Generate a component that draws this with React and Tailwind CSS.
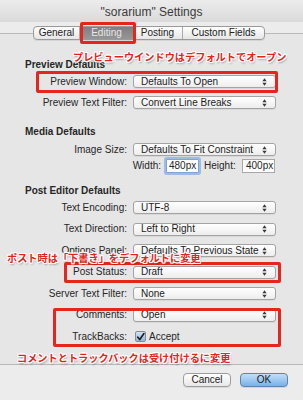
import React from "react";

const Arrows = () => (
  <svg width="5" height="8" viewBox="0 0 5 8" className="shrink-0">
    <path d="M2.5 0.3L4.6 3.2H0.4Z" fill="#3a3a3a" />
    <path d="M2.5 7.7L4.6 4.8H0.4Z" fill="#3a3a3a" />
  </svg>
);

function Popup({ value }) {
  return (
    <div className="w-[143px] h-[13px] flex items-center justify-between pl-[7px] pr-[8px] rounded-[3px] border border-[#a3a3a3] bg-gradient-to-b from-white to-[#ededed] shadow-[0_1px_0_rgba(0,0,0,0.06)] text-[10px] leading-none text-[#1c1c1c]">
      <span>{value}</span>
      <Arrows />
    </div>
  );
}

function Row({ label, children, cls }) {
  return (
    <div className={"flex items-center " + cls}>
      <div className="w-[127px] text-right text-[10px] leading-none text-[#262626]">{label}</div>
      <div className="ml-[6px] flex items-center">{children}</div>
    </div>
  );
}

function Heading({ children, cls }) {
  return (
    <div className={"h-[12px] pl-[25px] flex items-center text-[10px] leading-none font-bold text-[#262626] " + cls}>
      {children}
    </div>
  );
}

const ann =
  "absolute whitespace-nowrap font-bold text-[10.2px] leading-none text-[#e3241b] font-['Noto_Sans_CJK_JP',sans-serif] [text-shadow:1px_0_0_#fff,-1px_0_0_#fff,0_1px_0_#fff,0_-1px_0_#fff,1px_1px_0_#fff,-1px_-1px_0_#fff,1px_-1px_0_#fff,-1px_1px_0_#fff,1px_2px_2px_rgba(0,0,0,0.35)]";

export default function App() {
  return (
    <div className="relative w-[303px] h-[400px] overflow-hidden bg-[#ececec] font-['Liberation_Sans','Noto_Sans_CJK_JP',sans-serif]">
      <div className="h-[22px] bg-gradient-to-b from-[#ececec] to-[#dadada] flex items-center justify-center text-[12px] text-[#3a3a3a] pt-[1px]">
        "sorarium" Settings
      </div>
      <div className="h-[4px]" />
      <div className="relative z-10 h-[14px] -mb-[7px] pl-[33px] flex">
        <div className="flex h-[14px] rounded-[4px] border border-[#9a9a9a] bg-gradient-to-b from-white to-[#e6e6e6] overflow-hidden text-[10px] leading-none text-[#222] shadow-[0_1px_0_rgba(0,0,0,0.08)]">
          <div className="w-[46px] flex items-center justify-center border-r border-[#aaa]">General</div>
          <div className="w-[53px] flex items-center justify-center bg-gradient-to-b from-[#7f7f7f] to-[#969696] text-[#e8e8e8]">Editing</div>
          <div className="w-[50px] flex items-center justify-center border-r border-[#aaa]">Posting</div>
          <div className="w-[81px] flex items-center justify-center">Custom Fields</div>
        </div>
      </div>
      <div className="border-t border-b border-[#b9b9b9] bg-[#e6e6e6] pt-[25px] pb-[16px]">
        <Heading>Preview Defaults</Heading>
        <Row label="Preview Window:" cls="h-[21px]"><Popup value="Defaults To Open" /></Row>
        <Row label="Preview Text Filter:" cls="h-[21px]"><Popup value="Convert Line Breaks" /></Row>
        <Heading cls="mt-[13px]">Media Defaults</Heading>
        <Row label="Image Size:" cls="h-[17px] mt-[3px]"><Popup value="Defaults To Fit Constraint" /></Row>
        <div className="h-[15px] flex items-center text-[10px] leading-none text-[#262626]">
          <div className="w-[161px] text-right">Width:</div>
          <div className="ml-[5px] w-[33px] h-[14px] flex items-center pl-[2px] bg-white border border-[#7ea6da] shadow-[0_0_0_2px_rgba(120,165,225,0.65)] rounded-[1px]">480px</div>
          <div className="ml-[5px] w-[38px]">Height:</div>
          <div className="w-[33px] h-[14px] flex items-center pl-[3px] bg-white border border-[#a8a8a8]">400px</div>
        </div>
        <Heading cls="mt-[12px]">Post Editor Defaults</Heading>
        <Row label="Text Encoding:" cls="h-[21.5px]"><Popup value="UTF-8" /></Row>
        <Row label="Text Direction:" cls="h-[21.5px]"><Popup value="Left to Right" /></Row>
        <Row label="Options Panel:" cls="h-[21.5px]"><Popup value="Defaults To Previous State" /></Row>
        <Row label="Post Status:" cls="h-[21.5px]"><Popup value="Draft" /></Row>
        <Row label="Server Text Filter:" cls="h-[21.5px]"><Popup value="None" /></Row>
        <Row label="Comments:" cls="h-[21.5px]"><Popup value="Open" /></Row>
        <Row label="TrackBacks:" cls="h-[21.5px]">
          <div className="ml-[2px] w-[11px] h-[11px] rounded-[2px] border border-[#8a8a8a] bg-gradient-to-b from-[#cfe2f5] to-[#8fb8e2] flex items-center justify-center">
            <svg width="10" height="10" viewBox="0 0 10 10">
              <path d="M2 5.2L4.2 7.8L8.8 1.2" fill="none" stroke="#1d1d1d" strokeWidth="1.8" strokeLinecap="round" strokeLinejoin="round" />
            </svg>
          </div>
          <span className="ml-[3px] text-[10px] leading-none text-[#262626]">Accept</span>
        </Row>
      </div>
      <div className="mt-[8px] pr-[15px] flex justify-end gap-[9px] text-[10px] leading-none text-[#1c1c1c]">
        <div className="w-[48px] h-[14px] flex items-center justify-center rounded-[4px] border border-[#9d9d9d] bg-gradient-to-b from-white to-[#e8e8e8] shadow-[0_1px_0_rgba(0,0,0,0.08)]">Cancel</div>
        <div className="w-[48px] h-[14px] flex items-center justify-center rounded-[4px] border border-[#5b84b5] bg-gradient-to-b from-[#c4def6] to-[#76b2ea] shadow-[0_1px_0_rgba(0,0,0,0.1)]">OK</div>
      </div>

      {/* annotation boxes */}
      <div className="absolute left-[80px] top-[22px] w-[56px] h-[22px] border-[3px] border-[#e5261c] rounded-[2px] z-20" />
      <div className="absolute left-[36px] top-[71px] w-[242px] h-[22px] border-[3px] border-[#e5261c] rounded-[2px]" />
      <div className="absolute left-[64px] top-[262px] w-[217px] h-[21px] border-[3px] border-[#e5261c] rounded-[2px]" />
      <div className="absolute left-[53px] top-[308px] w-[228px] h-[39px] border-[3px] border-[#e5261c] rounded-[2px]" />

      <div className={ann + " left-[73px] top-[52px]"}>プレビューウインドウはデフォルトでオープン</div>
      <div className={ann + " left-[7px] top-[253px]"}>ポスト時は「下書き」をデフォルトに変更</div>
      <div className={ann + " left-[17px] top-[353px]"}>コメントとトラックバックは受け付けるに変更</div>
    </div>
  );
}
